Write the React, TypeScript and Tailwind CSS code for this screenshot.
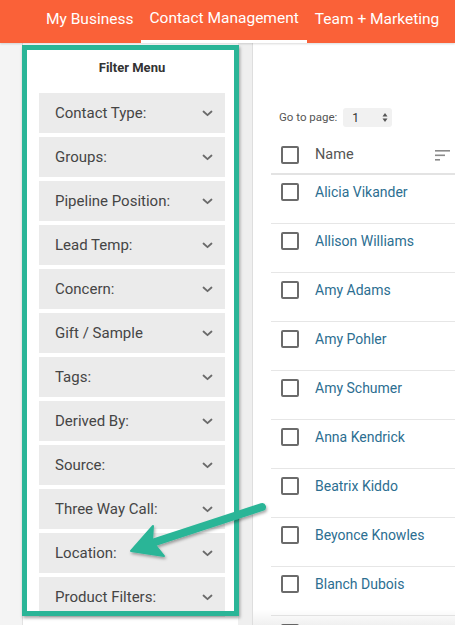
import React from "react";

const filters = [
  "Contact Type:",
  "Groups:",
  "Pipeline Position:",
  "Lead Temp:",
  "Concern:",
  "Gift / Sample",
  "Tags:",
  "Derived By:",
  "Source:",
  "Three Way Call:",
  "Location:",
  "Product Filters:",
];

const names = [
  "Alicia Vikander",
  "Allison Williams",
  "Amy Adams",
  "Amy Pohler",
  "Amy Schumer",
  "Anna Kendrick",
  "Beatrix Kiddo",
  "Beyonce Knowles",
  "Blanch Dubois",
  "",
];

function Chevron() {
  return (
    <svg width="11" height="7" viewBox="0 0 11 7" fill="none">
      <path d="M1.5 1.5 L5.5 5.2 L9.5 1.5" stroke="#6a6a6a" strokeWidth="1.8" strokeLinecap="round" strokeLinejoin="round" />
    </svg>
  );
}

function Checkbox() {
  return <div className="w-[18px] h-[18px] border-2 border-[#6b6b6b] rounded-[2px] bg-white shrink-0" />;
}

export default function App() {
  return (
    <div className="relative w-[455px] h-[625px] overflow-hidden bg-[#f4f4f4]" style={{ fontFamily: "Roboto, 'Noto Sans', sans-serif" }}>
      {/* Header */}
      <div className="relative z-10 h-[43px] bg-[#fa6138] flex items-stretch pl-[38px] text-white text-[15.5px] shadow-[0_1px_2px_rgba(0,0,0,0.15)]">
        <div className="px-2 flex items-center pb-[3px] whitespace-nowrap">My Business</div>
        <div className="px-2 flex items-center pb-[3px] whitespace-nowrap border-b-[3px] border-white">Contact Management</div>
        <div className="px-2 flex items-center pb-[3px] whitespace-nowrap">Team + Marketing</div>
      </div>

      <div className="flex h-[582px]">
        <div className="w-[22px] shrink-0" />
        {/* Filter panel */}
        <div className="w-[216px] shrink-0 bg-white pt-[17px] pl-[16px] border-l border-[#e2e2e2]">
          <div className="w-[186px] text-center text-[13px] leading-[16px] font-bold text-[#333] mb-[17px]">Filter Menu</div>
          <div className="flex flex-col gap-[4px]">
            {filters.map((f) => (
              <div key={f} className="w-[186px] h-[40px] shrink-0 bg-[#ebebeb] flex items-center justify-between pl-[16px] pr-[12px] text-[15px] text-[#454545]">
                <span>{f}</span>
                <Chevron />
              </div>
            ))}
          </div>
        </div>
        <div className="w-[15px] shrink-0 bg-[#efefef] border-r border-[#dedede]" />
        {/* Right panel */}
        <div className="flex-1 bg-white pt-[65px] pl-[18px] relative">
          <div className="flex items-center pl-[8px] h-[19px] text-[11.5px] text-[#555]">
            <span>Go to page:</span>
            <div className="ml-[6px] w-[49px] h-[19px] rounded-[3px] bg-[#f1f1f1] flex items-center justify-between pl-[9px] pr-[4px] text-[#333] text-[12px]">
              <span>1</span>
              <svg width="6" height="11" viewBox="0 0 6 11">
                <path d="M0.5 4.5 L3 1 L5.5 4.5 Z" fill="#555" />
                <path d="M0.5 6.5 L3 10 L5.5 6.5 Z" fill="#555" />
              </svg>
            </div>
          </div>
          <div className="mt-[19px] pb-[9px] pl-[10px] flex items-center border-b-2 border-[#e3e3e3]">
            <Checkbox />
            <span className="ml-[16px] text-[14.5px] text-[#555] leading-[18px]">Name</span>
            <svg className="ml-auto mr-[5px]" width="15" height="11" viewBox="0 0 15 11">
              <rect x="0" y="0" width="15" height="1.6" fill="#8a8a8a" />
              <rect x="0" y="4.5" width="10" height="1.6" fill="#8a8a8a" />
              <rect x="0" y="9" width="5" height="1.6" fill="#8a8a8a" />
            </svg>
          </div>
          {names.map((n, i) => (
            <div key={i} className="h-[49px] pt-[8px] pl-[10px] flex items-start border-b border-[#e6e6e6]">
              <Checkbox />
              {n && <span className="ml-[16px] text-[14px] leading-[18px] text-[#2c6e91]">{n}</span>}
            </div>
          ))}
          <div className="absolute left-0 right-0 bottom-0 h-[16px] bg-gradient-to-b from-transparent to-[rgba(0,0,0,0.06)]" />
        </div>
      </div>

      {/* Teal annotation frame */}
      <div className="absolute left-[22px] top-[45px] w-[217px] h-[571px] border-[5px] border-[#2ab597] shadow-[1px_2px_3px_rgba(0,0,0,0.35)] pointer-events-none" />

      {/* Annotation arrow */}
      <svg className="absolute left-0 top-0 pointer-events-none" width="455" height="625" viewBox="0 0 455 625">
        <defs>
          <filter id="sh" x="-20%" y="-20%" width="140%" height="140%">
            <feDropShadow dx="1" dy="2" stdDeviation="1.5" floodColor="#000" floodOpacity="0.35" />
          </filter>
        </defs>
        <g filter="url(#sh)" fill="#2ab597" stroke="#2ab597">
          <line x1="262" y1="507" x2="152" y2="543" strokeWidth="8" strokeLinecap="round" />
          <path d="M131 551 L153 526 L152 541 L164 556 Z" strokeWidth="2" strokeLinejoin="round" />
        </g>
      </svg>
    </div>
  );
}
